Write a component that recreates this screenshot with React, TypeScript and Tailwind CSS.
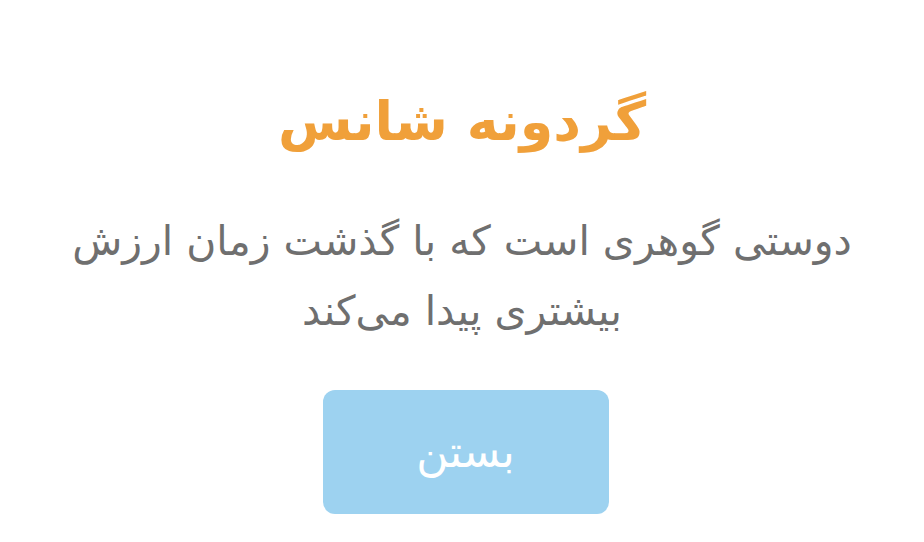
import React from 'react';

export default function App() {
  return (
    <div
      dir="rtl"
      className="w-[924px] h-[542px] bg-white flex flex-col items-center"
      style={{ fontFamily: '"DejaVu Sans", "Noto Sans", sans-serif' }}
    >
      <h1 className="mt-[80px] text-[54px] leading-[84px] font-bold text-[#f0a03a]">گردونه شانس</h1>
      <p className="mt-[42px] text-center text-[41px] leading-[70px] text-[#6f6f6f]">
        دوستی گوهری است که با گذشت زمان ارزش
        <br />
        بیشتری پیدا می‌کند
      </p>
      <button className="mt-[44px] ml-[7px] w-[286px] h-[124px] rounded-[12px] bg-[#9dd2f0] text-white text-[44px]">
        بستن
      </button>
    </div>
  );
}
